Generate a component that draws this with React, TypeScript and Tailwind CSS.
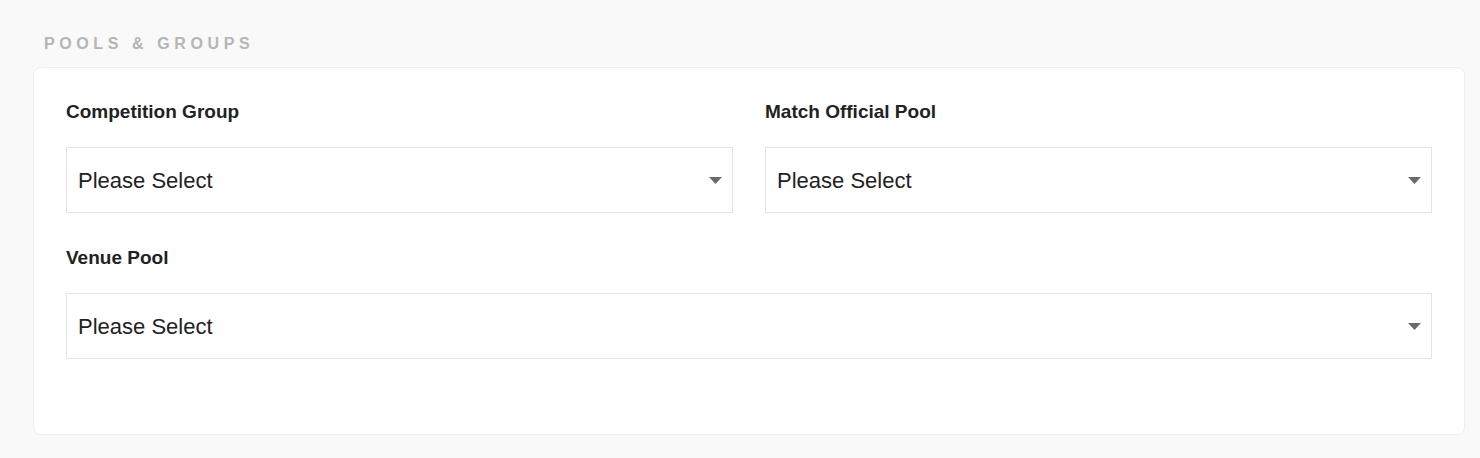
type FieldProps = {
  label: string;
  value?: string;
  wide?: boolean;
};

function Caret() {
  return (
    <svg width="13" height="7" viewBox="0 0 13 7" className="shrink-0">
      <path d="M0 0 H13 L6.5 7 Z" fill="#6a6a6a" />
    </svg>
  );
}

function SelectField({ label, value = 'Please Select', wide }: FieldProps) {
  return (
    <div className={wide ? 'col-span-2' : ''}>
      <label className="block text-[19px] leading-[22px] font-bold text-[#222222] mb-[24px]">
        {label}
      </label>
      <div className="flex h-[66px] items-center justify-between border border-[#e4e4e4] bg-white pl-[11px] pr-[10px] cursor-pointer">
        <span className="text-[22px] text-[#222222]">{value}</span>
        <Caret />
      </div>
    </div>
  );
}

export default function App() {
  return (
    <div
      className="min-h-screen bg-[#f9f9f9] pl-[33px] pr-[15px] pt-[34px] pb-6"
      style={{ fontFamily: '"Liberation Sans", Arial, sans-serif' }}
    >
      <h3 className="pl-[11px] text-[16px] leading-[19px] font-bold tracking-[4.6px] text-[#b5b5b5] mb-[14px]">
        POOLS &amp; GROUPS
      </h3>
      <div className="rounded-lg border border-[#efefef] bg-white px-8 pt-[33px] pb-[75px]">
        <div className="grid grid-cols-2 gap-x-8 gap-y-[34px]">
          <SelectField label="Competition Group" />
          <SelectField label="Match Official Pool" />
          <SelectField label="Venue Pool" wide />
        </div>
      </div>
    </div>
  );
}
